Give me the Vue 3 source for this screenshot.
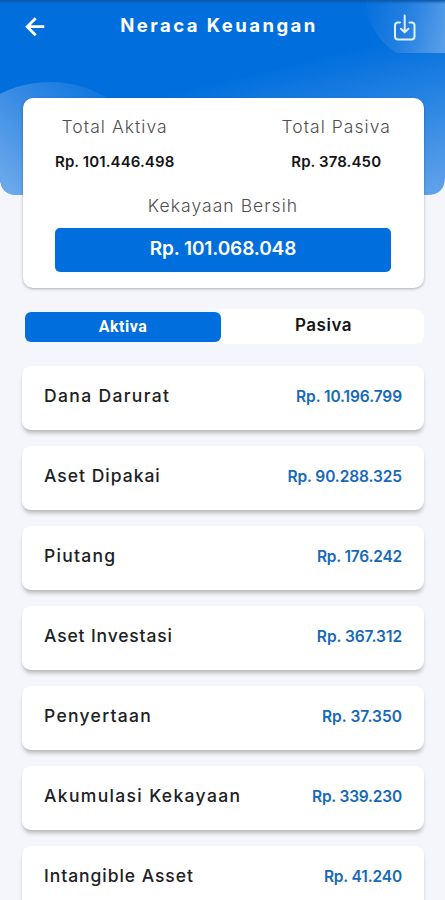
<script setup>
const assets = [
  { name: 'Dana Darurat', value: 'Rp. 10.196.799', track: 1.35, vtrack: -0.1 },
  { name: 'Aset Dipakai', value: 'Rp. 90.288.325', track: 1, vtrack: -0.1 },
  { name: 'Piutang', value: 'Rp. 176.242', track: 1.25, vtrack: -0.2 },
  { name: 'Aset Investasi', value: 'Rp. 367.312', track: 0.85, vtrack: -0.05 },
  { name: 'Penyertaan', value: 'Rp. 37.350', track: 1.3, vtrack: 0.05 },
  { name: 'Akumulasi Kekayaan', value: 'Rp. 339.230', track: 1.35, vtrack: -0.2 },
  { name: 'Intangible Asset', value: 'Rp. 41.240', track: 0.95, vtrack: -0.15 },
]
</script>

<template>
  <div class="screen">
    <svg class="backdrop" viewBox="0 0 445 196" aria-hidden="true">
      <defs>
        <clipPath id="clip"><path d="M0 0H445V177Q445 195 427 195H18Q0 195 0 177Z" /></clipPath>
        <linearGradient id="base" gradientUnits="userSpaceOnUse" x1="360" y1="48" x2="400" y2="215">
          <stop offset="0" stop-color="#006fdd" />
          <stop offset="1" stop-color="#69a6eb" />
        </linearGradient>
        <linearGradient id="blob" gradientUnits="userSpaceOnUse" x1="110" y1="85" x2="10" y2="195">
          <stop offset="0" stop-color="#0a73de" />
          <stop offset="0.4" stop-color="#3087e3" />
          <stop offset="0.7" stop-color="#4f98e7" />
          <stop offset="1" stop-color="#6daaea" />
        </linearGradient>
        <linearGradient id="corner" gradientUnits="userSpaceOnUse" x1="366" y1="15" x2="445" y2="35">
          <stop offset="0" stop-color="#0871dd" />
          <stop offset="0.5" stop-color="#2480e1" />
          <stop offset="1" stop-color="#579de9" />
        </linearGradient>
        <linearGradient id="status" x1="0" y1="0" x2="0" y2="1">
          <stop offset="0" stop-color="#0b57a8" />
          <stop offset="1" stop-color="#0b57a8" stop-opacity="0" />
        </linearGradient>
      </defs>
      <g clip-path="url(#clip)">
        <rect width="445" height="196" fill="url(#base)" />
        <circle cx="50" cy="192" r="110" fill="url(#blob)" />
        <path d="M366 0C367 23 378 42 397 53H445V0Z" fill="url(#corner)" />
        <rect width="445" height="4" fill="url(#status)" />
      </g>
    </svg>

    <header class="bar">
      <svg class="back" viewBox="0 0 20 20"><path d="M19.3 9.7H2.4M10.7 1.2L2.2 9.7l8.5 8.5" /></svg>
      <h1>Neraca Keuangan</h1>
      <svg class="download" viewBox="0 0 24 28"><path d="M7 8.5H5Q2 8.5 2 11.5V22.5Q2 25.5 5 25.5H18.5Q21.5 25.5 21.5 22.5V11.5Q21.5 8.5 18.5 8.5H16.5M11.7 1.5V18M8 14.7L11.7 18.4L15.4 14.7" /></svg>
    </header>

    <section class="summary">
      <div class="totals">
        <div class="total active">
          <span class="label">Total Aktiva</span>
          <strong>Rp. 101.446.498</strong>
        </div>
        <div class="total passive">
          <span class="label">Total Pasiva</span>
          <strong>Rp. 378.450</strong>
        </div>
      </div>
      <span class="label net-label">Kekayaan Bersih</span>
      <div class="net">Rp. 101.068.048</div>
    </section>

    <nav class="tabs">
      <button class="tab selected">Aktiva</button>
      <button class="tab">Pasiva</button>
    </nav>

    <ul class="list">
      <li v-for="a in assets" :key="a.name">
        <span class="name" :style="{ letterSpacing: a.track + 'px' }">{{ a.name }}</span>
        <span class="value" :style="{ letterSpacing: a.vtrack + 'px' }">{{ a.value }}</span>
      </li>
    </ul>
  </div>
</template>

<style>
body { margin: 0; background: #f4f6fb; overflow: hidden; }
</style>

<style scoped>
.screen {
  position: relative;
  width: 445px;
  height: 900px;
  overflow: hidden;
  box-sizing: border-box;
  background: #f4f6fb;
  font-family: Inter, "Open Sans", sans-serif;
  color: #202124;
}
.backdrop { position: absolute; top: 0; left: 0; width: 445px; height: 196px; }
.bar {
  position: relative;
  display: flex;
  align-items: flex-start;
  justify-content: space-between;
  height: 98px;
  padding: 0 28px 0 25px;
  box-sizing: border-box;
}
.bar svg { fill: none; stroke: #fff; }
.back { width: 20px; height: 20px; margin-top: 17px; stroke-width: 2.8; }
.bar .download { width: 24px; height: 28px; margin-top: 14px; stroke-width: 2; stroke: #e3effc; stroke-linecap: round; stroke-linejoin: round; }
h1 { margin: 13px 0 0; font-size: 18.5px; line-height: 25px; font-weight: 700; letter-spacing: 2.45px; color: #fff; white-space: nowrap; }
.summary {
  position: relative;
  display: flex;
  flex-direction: column;
  width: 401px;
  height: 190px;
  margin-left: 23px;
  padding: 17px 33px 0 32px;
  box-sizing: border-box;
  border-radius: 10px;
  background: #fff;
  box-shadow: 0 1px 3px rgba(0, 0, 0, 0.3);
}
.totals { display: flex; justify-content: space-between; }
.total { display: flex; flex-direction: column; align-items: center; }
.label { font-size: 17.5px; line-height: 24px; font-weight: 300; letter-spacing: 1.05px; color: #4f4f4f; white-space: nowrap; }
.total strong { margin-top: 12px; font-size: 15px; line-height: 21px; font-weight: 600; letter-spacing: 0.1px; color: #151515; white-space: nowrap; }
.net-label { align-self: center; margin-top: 22px; }
.net {
  display: flex;
  justify-content: center;
  height: 44px;
  margin-top: 10px;
  border-radius: 5px;
  background: #006fdd;
  color: #fff;
  font-size: 19px;
  line-height: 41px;
  font-weight: 600;
  letter-spacing: -0.12px;
}
.tabs {
  display: flex;
  width: 401px;
  height: 35px;
  margin: 21px 0 0 23px;
  padding: 3px 2px;
  box-sizing: border-box;
  border-radius: 9px;
  background: linear-gradient(90deg, #f4f6fb 0 190px, #fff 200px);
}
.tab { flex: none; width: 201px; height: 29px; padding: 0 0 2px 4px; border: 0; background: none; font: 600 17px/25px Inter, sans-serif; letter-spacing: 0.5px; color: #151515; }
.tab.selected { width: 196px; height: 30px; padding: 0; border-radius: 6px; background: #006fdd; color: #fff; font: 700 16px/30px Roboto, sans-serif; letter-spacing: 0.5px; }
.list { display: flex; flex-direction: column; gap: 16px; margin: 22px 0 0 22px; padding: 0; list-style: none; width: 402px; }
li {
  display: flex;
  flex: none;
  justify-content: space-between;
  height: 64px;
  padding: 18px 22px 0 22px;
  box-sizing: border-box;
  border-radius: 9px;
  background: #fff;
  box-shadow: 0 4px 4px -1px rgba(0, 0, 0, 0.25);
  line-height: 24px;
  white-space: nowrap;
}
.name { font-size: 17.5px; font-weight: 500; }
.value { font-size: 15.5px; font-weight: 600; color: #1769b9; line-height: 25px; }
</style>
